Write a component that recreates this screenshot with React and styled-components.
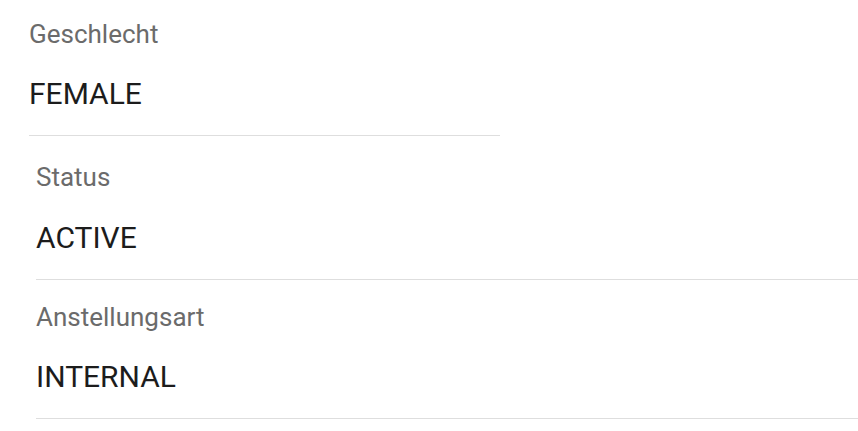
import React from "react";
import styled, { createGlobalStyle } from "styled-components";

const GlobalStyle = createGlobalStyle`
  body {
    margin: 0;
    background: #ffffff;
    font-family: Roboto, "Liberation Sans", sans-serif;
  }
`;

const Page = styled.div`
  display: flex;
  flex-direction: column;
  padding-top: 18px;
`;

const Field = styled.div`
  display: flex;
  flex-direction: column;
  margin-left: ${(p) => p.$indent}px;
  width: ${(p) => (p.$width ? `${p.$width}px` : "auto")};
  padding-bottom: 22px;
  border-bottom: 1px solid #dedede;
  margin-bottom: ${(p) => p.$gap || 0}px;
`;

const Label = styled.div`
  font-size: 26px;
  line-height: 32px;
  color: #6b6b6b;
`;

const Value = styled.div`
  margin-top: ${(p) => p.$offset}px;
  font-size: 30px;
  line-height: 38px;
  color: #1c1c1c;
`;

const fields = [
  { label: "Geschlecht", value: "FEMALE", indent: 29, width: 471, gap: 25, offset: 25 },
  { label: "Status", value: "ACTIVE", indent: 36, gap: 21, offset: 26 },
  { label: "Anstellungsart", value: "INTERNAL", indent: 36, offset: 25 },
];

export default function App() {
  return (
    <>
      <GlobalStyle />
      <Page>
        {fields.map((f) => (
          <Field key={f.label} $indent={f.indent} $width={f.width} $gap={f.gap}>
            <Label>{f.label}</Label>
            <Value $offset={f.offset}>{f.value}</Value>
          </Field>
        ))}
      </Page>
    </>
  );
}
